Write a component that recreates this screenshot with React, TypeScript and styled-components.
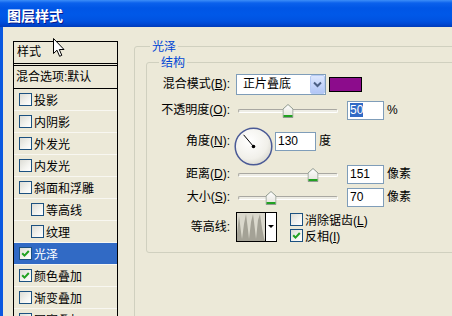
import styled, { createGlobalStyle } from 'styled-components';

const GlobalStyle = createGlobalStyle`
  html, body {
    margin: 0;
    padding: 0;
    background: #ece9d8;
  }
  body {
    font-family: "Liberation Sans", "Noto Sans CJK SC", sans-serif;
    font-size: 12px;
    color: #000;
  }
`;

type StyleItem = { label: string; checked?: boolean; indent?: boolean; active?: boolean };

const styleItems: StyleItem[] = [
  { label: '投影' },
  { label: '内阴影' },
  { label: '外发光' },
  { label: '内发光' },
  { label: '斜面和浮雕' },
  { label: '等高线', indent: true },
  { label: '纹理', indent: true },
  { label: '光泽', checked: true, active: true },
  { label: '颜色叠加', checked: true },
  { label: '渐变叠加' },
  { label: '图案叠加' },
];

const CheckBox = ({ checked }: { checked?: boolean }) => (
  <Box>
    {checked && (
      <svg width="9" height="9" viewBox="0 0 9 9">
        <path d="M1.2 4.2 L3.5 6.6 L7.8 2" fill="none" stroke="#21a121" strokeWidth="2" />
      </svg>
    )}
  </Box>
);

const SliderControl = ({ pct }: { pct: number }) => (
  <Slider>
    <Thumb style={{ left: `${2 + pct}px` }} width="11" height="14" viewBox="0 0 11 14">
      <defs>
        <linearGradient id="thumbFill" x1="0" y1="0" x2="0" y2="1">
          <stop offset="0" stopColor="#ffffff" />
          <stop offset="1" stopColor="#e3e2da" />
        </linearGradient>
      </defs>
      <path d="M0.5 5 L5.5 0.5 L10.5 5 V13.5 H0.5 Z" fill="url(#thumbFill)" stroke="#8f9a8f" />
      <path d="M1 12 H10" stroke="#21a121" strokeWidth="2" />
    </Thumb>
  </Slider>
);

const AngleDial = () => (
  <Dial width="39" height="39" viewBox="0 0 39 39">
    <defs>
      <radialGradient id="dialFill" cx="0.4" cy="0.35" r="0.7">
        <stop offset="0" stopColor="#ffffff" />
        <stop offset="0.7" stopColor="#f1f0ea" />
        <stop offset="1" stopColor="#d9d8cf" />
      </radialGradient>
    </defs>
    <circle cx="19.5" cy="19.5" r="18.3" fill="url(#dialFill)" stroke="#4a5a96" strokeWidth="1.5" />
    <line x1="19.5" y1="19.5" x2="9.6" y2="7.8" stroke="#000" strokeWidth="1" />
    <circle cx="19.5" cy="19.5" r="1.8" fill="#000" />
  </Dial>
);

const ContourPreview = () => (
  <Contour width="41" height="30" viewBox="0 0 41 30">
    <rect x="0.5" y="0.5" width="40" height="29" fill="#fff" stroke="#000" />
    <rect x="1" y="1" width="28" height="28" fill="#dad8cc" />
    <polygon
      points="1,29 1,22 3,4 5,20 6,27 8,12 10,2 12,18 13,27 15,10 17,2 19,18 20,27 22,8 24,2 26,16 28,26 29,29"
      fill="#a4a296"
    />
    <line x1="29.5" y1="1" x2="29.5" y2="29" stroke="#000" />
    <polygon points="32,13 38,13 35,16" fill="#000" />
  </Contour>
);

const Cursor = () => (
  <CursorIcon width="12" height="20" viewBox="0 0 12 20">
    <path
      d="M0.5 0.5 V15.5 L4 12.2 L6.6 18.3 L8.8 17.3 L6.3 11.5 H11 Z"
      fill="#fff"
      stroke="#000"
      strokeLinejoin="miter"
    />
  </CursorIcon>
);

export default function App() {
  return (
    <>
      <GlobalStyle />
      <Window>
        <TitleBar>图层样式</TitleBar>
        <Body>
          <StyleList>
            <ListHeader>样式</ListHeader>
            <BlendRow>混合选项:默认</BlendRow>
            {styleItems.map((item) => (
              <ListItem key={item.label} $indent={item.indent} $active={item.active}>
                <CheckBox checked={item.checked} />
                <span>{item.label}</span>
              </ListItem>
            ))}
          </StyleList>

          <RightColumn>
            <GroupBox $outer>
              <GroupTitle $offset={15}>光泽</GroupTitle>
              <GroupBox>
                <GroupTitle $offset={12}>结构</GroupTitle>

                <Row $top={6} $height={21}>
                  <Label>混合模式(<u>B</u>):</Label>
                  <Select>
                    <SelectText>正片叠底</SelectText>
                    <DropButton>
                      <svg width="9" height="7" viewBox="0 0 9 7">
                        <path d="M1 1.5 L4.5 5 L8 1.5" fill="none" stroke="#4d6185" strokeWidth="2" />
                      </svg>
                    </DropButton>
                  </Select>
                  <Swatch />
                </Row>

                <Row $top={5} $height={21}>
                  <Label>不透明度(<u>O</u>):</Label>
                  <SliderControl pct={50} />
                  <Field $width={37}>
                    <Selected>50</Selected>
                  </Field>
                  <Unit>%</Unit>
                </Row>

                <Row $top={6} $height={38} $alignTop>
                  <Label $offset={5}>角度(<u>N</u>):</Label>
                  <AngleDial />
                  <Field $width={41} $offset={5}>130</Field>
                  <Unit $offset={5}>度</Unit>
                </Row>

                <Row $top={0} $height={19}>
                  <Label>距离(<u>D</u>):</Label>
                  <SliderControl pct={75} />
                  <Field $width={37}>151</Field>
                  <Unit>像素</Unit>
                </Row>

                <Row $top={4} $height={19}>
                  <Label>大小(<u>S</u>):</Label>
                  <SliderControl pct={33} />
                  <Field $width={37}>70</Field>
                  <Unit>像素</Unit>
                </Row>

                <Row $top={5} $height={30}>
                  <Label>等高线:</Label>
                  <ContourPreview />
                  <CheckColumn>
                    <CheckLine>
                      <CheckBox />
                      <span>消除锯齿(<u>L</u>)</span>
                    </CheckLine>
                    <CheckLine>
                      <CheckBox checked />
                      <span>反相(<u>I</u>)</span>
                    </CheckLine>
                  </CheckColumn>
                </Row>
              </GroupBox>
            </GroupBox>
          </RightColumn>
        </Body>
        <Cursor />
      </Window>
    </>
  );
}

const Window = styled.div`
  position: relative;
  width: 452px;
  height: 316px;
  overflow: hidden;
  display: flex;
  flex-direction: column;
  background: #ece9d8;
`;

const TitleBar = styled.div`
  flex: none;
  height: 27px;
  box-sizing: border-box;
  padding: 2px 0 0 7px;
  display: flex;
  align-items: center;
  background: linear-gradient(
    to bottom,
    #3d8ef8 0px,
    #0b61ec 3px,
    #0056e6 8px,
    #0058e8 15px,
    #0052e0 21px,
    #0048d3 24px,
    #003bb9 27px
  );
  color: #fff;
  font-family: "Noto Sans CJK SC", sans-serif;
  font-size: 14px;
  font-weight: bold;
  text-shadow: 1px 1px 0 #0a1a8a;
`;

const Body = styled.div`
  flex: 1;
  min-height: 0;
  display: flex;
  align-items: flex-start;
  border-left: 3px solid #0a58e0;
  padding: 14px 0 0 10px;
`;

const StyleList = styled.div`
  flex: none;
  align-self: stretch;
  width: 105px;
  box-sizing: border-box;
  border: 1px solid #000;
  border-bottom: none;
  font-family: "Liberation Sans", "Noto Sans CJK SC", sans-serif;
`;

const ListHeader = styled.div`
  height: 21px;
  line-height: 21px;
  padding-left: 3px;
  border-bottom: 3px double #000;
`;

const BlendRow = styled.div`
  height: 22px;
  line-height: 22px;
  padding-left: 2px;
  border-bottom: 1px solid #000;
  white-space: nowrap;
`;

const ListItem = styled.div<{ $indent?: boolean; $active?: boolean }>`
  height: 21px;
  display: flex;
  align-items: center;
  gap: 2px;
  padding-left: ${(p) => (p.$indent ? 17 : 5)}px;
  border-bottom: 1px solid #f8f7f1;
  background: ${(p) => (p.$active ? '#316ac5' : 'transparent')};
  color: ${(p) => (p.$active ? '#fff' : '#000')};
  white-space: nowrap;
`;

const Box = styled.span`
  flex: none;
  width: 13px;
  height: 13px;
  box-sizing: border-box;
  border: 1px solid #1c5180;
  background: linear-gradient(135deg, #dcdcd5 0%, #f4f4f0 60%, #fff 100%);
  display: inline-flex;
  align-items: center;
  justify-content: center;
`;

const RightColumn = styled.div`
  flex: none;
  margin: -1px 0 0 16px;
`;

const GroupBox = styled.fieldset<{ $outer?: boolean }>`
  min-inline-size: 0;
  box-sizing: border-box;
  margin: ${(p) => (p.$outer ? '0' : '4px 0 0 11px')};
  padding: ${(p) => (p.$outer ? '0' : '0 0 10px 0')};
  width: ${(p) => (p.$outer ? 340 : 320)}px;
  height: ${(p) => (p.$outer ? '300px' : 'auto')};
  border: 1px solid #d0d0bf;
  border-radius: 3px;
`;

const GroupTitle = styled.legend<{ $offset: number }>`
  margin-left: ${(p) => p.$offset}px;
  padding: 0 2px;
  font-family: "Noto Sans CJK SC", sans-serif;
  font-size: 12px;
  line-height: 12px;
  color: #0046d5;
`;

const Row = styled.div<{ $top: number; $height: number; $alignTop?: boolean }>`
  display: flex;
  align-items: ${(p) => (p.$alignTop ? 'flex-start' : 'center')};
  margin-top: ${(p) => p.$top}px;
  height: ${(p) => p.$height}px;
  white-space: nowrap;
`;

const Label = styled.div<{ $offset?: number }>`
  flex: none;
  width: 83px;
  margin-right: 6px;
  margin-top: ${(p) => p.$offset ?? 0}px;
  line-height: 19px;
  text-align: right;
`;

const Select = styled.div`
  flex: none;
  width: 90px;
  height: 21px;
  box-sizing: border-box;
  border: 1px solid #7f9db9;
  background: #fff;
  display: flex;
  align-items: center;
`;

const SelectText = styled.span`
  flex: 1;
  padding-left: 6px;
  line-height: 19px;
`;

const DropButton = styled.span`
  flex: none;
  width: 15px;
  height: 19px;
  box-sizing: border-box;
  border: 1px solid #b7cbf5;
  border-radius: 2px;
  background: linear-gradient(to bottom, #dde7fd 0%, #c6d6fb 50%, #b2c6f5 100%);
  display: flex;
  align-items: center;
  justify-content: center;
`;

const Swatch = styled.div`
  flex: none;
  width: 33px;
  height: 15px;
  box-sizing: border-box;
  margin-left: 3px;
  border: 1px solid #000;
  background: #8c0c8c;
`;

const Slider = styled.div`
  position: relative;
  flex: none;
  width: 104px;
  height: 16px;
  margin-right: 7px;

  &::before {
    content: '';
    position: absolute;
    left: 2px;
    right: 2px;
    top: 6px;
    height: 4px;
    box-sizing: border-box;
    border: 1px solid #a9a8a2;
    border-right-color: #fff;
    border-bottom-color: #fff;
    border-radius: 2px;
    background: #eeede5;
  }
`;

const Thumb = styled.svg`
  position: absolute;
  top: 1px;
  transform: translateX(-50%);
`;

const Field = styled.div<{ $width: number; $offset?: number }>`
  flex: none;
  width: ${(p) => p.$width}px;
  height: 19px;
  box-sizing: border-box;
  margin-top: ${(p) => p.$offset ?? 0}px;
  border: 1px solid #7f9db9;
  background: #fff;
  padding-left: 2px;
  line-height: 17px;
  font-size: 12px;
`;

const Selected = styled.span`
  background: #316ac5;
  color: #fff;
`;

const Unit = styled.span<{ $offset?: number }>`
  margin-left: 3px;
  margin-top: ${(p) => p.$offset ?? 0}px;
  line-height: 19px;
`;

const Dial = styled.svg`
  flex: none;
  margin-left: -2px;
  margin-right: 2px;
`;

const Contour = styled.svg`
  flex: none;
`;

const CheckColumn = styled.div`
  display: flex;
  flex-direction: column;
  margin-left: 13px;
`;

const CheckLine = styled.div`
  height: 16px;
  display: flex;
  align-items: center;
  gap: 2px;
`;

const CursorIcon = styled.svg`
  position: absolute;
  left: 53px;
  top: 38px;
`;
